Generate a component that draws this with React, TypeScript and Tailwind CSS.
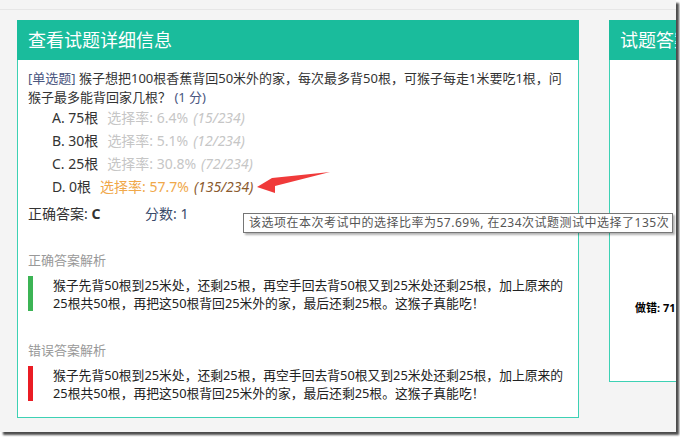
import React from 'react'

const font = { fontFamily: '"Noto Sans", "Noto Sans CJK SC", sans-serif' }

interface OptionProps {
  label: string
  rate: string
  count: string
  picked?: boolean
}

function OptionRow({ label, rate, count, picked = false }: OptionProps) {
  return (
    <div className="flex items-center h-[23px] text-[14px] whitespace-nowrap">
      <span className="text-[#333]">{label}</span>
      <span className={`ml-[9px] ${picked ? 'text-[#f0a84a]' : 'text-[#c6c6c6]'}`}>选择率: {rate}</span>
      <span className={`ml-[5px] italic ${picked ? 'text-[#8a5a2e]' : 'text-[#c6c6c6]'}`}>{count}</span>
    </div>
  )
}

function Analysis({ title, barColor }: { title: string; barColor: string }) {
  return (
    <div>
      <div className="text-[13px] leading-[18px] text-[#999]">{title}</div>
      <div className="flex mt-[7px]">
        <div className={`w-[5px] h-[35px] shrink-0 ${barColor}`} />
        <div className="pl-[20px] text-[12.8px] leading-[18px] text-[#222] whitespace-nowrap">
          <div>猴子先背50根到25米处，还剩25根，再空手回去背50根又到25米处还剩25根，加上原来的</div>
          <div>25根共50根，再把这50根背回25米外的家，最后还剩25根。这猴子真能吃！</div>
        </div>
      </div>
    </div>
  )
}

export default function App() {
  return (
    <div className="w-[680px] h-[437px] bg-white" style={font}>
      <div className="relative w-[676px] h-[432px] bg-[#f4f4f4] overflow-hidden shadow-[3px_3px_2px_rgba(0,0,0,0.7)]">
        {/* top strip */}
        <div className="h-[10px] border-b border-[#e6e6e6]" />

        <div className="flex items-start gap-[30px] pl-[17px] pt-[10px]">
          {/* Left card */}
          <div className="w-[562px] shrink-0 bg-white border border-[#3dd1b4]">
            <div className="h-[40px] -mx-px -mt-px bg-[#1abc9c] flex items-center px-[11px]">
              <span className="text-white text-[18px] pt-[1px]">查看试题详细信息</span>
            </div>
            <div className="px-[10px] pt-[9px] pb-[15px]">
              <div className="text-[13px] leading-[19px] text-[#333] whitespace-nowrap">
                <div>
                  <span className="text-[#4a5680]">[单选题]</span> 猴子想把100根香蕉背回50米外的家，每次最多背50根，可猴子每走1米要吃1根，问
                </div>
                <div>
                  猴子最多能背回家几根？ <span className="text-[#4a5680]">(1 分)</span>
                </div>
              </div>

              <div className="pl-[24px] -mt-[1px]">
                <OptionRow label="A. 75根" rate="6.4%" count="(15/234)" />
                <OptionRow label="B. 30根" rate="5.1%" count="(12/234)" />
                <OptionRow label="C. 25根" rate="30.8%" count="(72/234)" />
                <OptionRow label="D. 0根" rate="57.7%" count="(135/234)" picked />
              </div>

              <div className="flex items-center h-[20px] mt-[5px] text-[14px] text-[#333]">
                <div className="w-[117px]">
                  正确答案: <b>C</b>
                </div>
                <div className="text-[#3a4a6a]">分数: 1</div>
              </div>

              <div className="mt-[28px]">
                <Analysis title="正确答案解析" barColor="bg-[#3cb455]" />
              </div>
              <div className="mt-[29px]">
                <Analysis title="错误答案解析" barColor="bg-[#ea1c24]" />
              </div>
            </div>
          </div>

          {/* Right card */}
          <div className="w-[140px] h-[362px] shrink-0 bg-white border border-[#3dd1b4] flex flex-col">
            <div className="h-[40px] -mx-px -mt-px bg-[#1abc9c] flex items-center px-[11px] whitespace-nowrap">
              <span className="text-white text-[18px] pt-[1px]">试题答案统计</span>
            </div>
            <div className="pl-[25px] pt-[240px] text-[11px] font-bold text-black whitespace-nowrap">做错: 71</div>
          </div>
        </div>

        {/* red arrow */}
        <svg className="absolute left-[255px] top-[170px]" width="78" height="28" viewBox="0 0 78 28">
          <polygon points="2,17 17,8 75,2 20,16 20,23" fill="#f03a3a" />
        </svg>

        {/* tooltip */}
        <div className="absolute left-[243px] top-[213px] w-[430px] h-[20px] bg-white border border-[#767676] shadow-[2px_2px_2px_rgba(0,0,0,0.3)] flex items-center pl-[5px] text-[12px] tracking-[0.5px] text-[#555] whitespace-nowrap">
          该选项在本次考试中的选择比率为57.69%, 在234次试题测试中选择了135次
        </div>
      </div>
    </div>
  )
}
